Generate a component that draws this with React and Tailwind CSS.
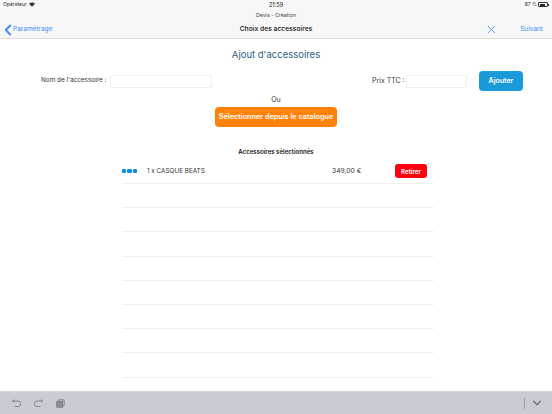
import React from 'react';
import { ChevronLeft, ChevronDown, X } from 'lucide-react';

const StatusBar = () => (
  <div className="relative flex h-[9px] items-center justify-between pl-[3px] pr-[3px] text-[5px] text-[#333]">
    <div className="flex items-center gap-[2px]">
      <span>Opérateur</span>
      <svg width="6" height="5" viewBox="0 0 12 9" fill="#333">
        <path d="M6 9 0 3a8.500 8.500 0 0 1 12 0z" />
      </svg>
    </div>
    <span className="absolute left-0 right-0 top-[1px] text-center text-[5.500px] font-medium">21:59</span>
    <div className="flex items-center gap-[1px]">
      <span>87 %</span>
      <div className="flex items-center">
        <div className="h-[5px] w-[10px] rounded-[1px] border-[0.5px] border-[#333] p-[0.5px]">
          <div className="h-full w-[85%] bg-[#222]" />
        </div>
        <div className="h-[2px] w-[1px] bg-[#333]" />
      </div>
    </div>
  </div>
);

const Header = () => (
  <div className="h-[39px] shrink-0 border-b border-[#dcdcdc] bg-[#f7f7f7]">
    <StatusBar />
    <div className="flex h-[12px] items-center justify-center pt-[2px] text-[5.250px] text-[#444]">Devis - Création</div>
    <div className="relative flex h-[17px] items-center justify-between pr-[9px]">
      <div className="flex items-center text-[#3f8cf5]">
        <ChevronLeft size={18} strokeWidth={2.5} className="ml-[-1px] mr-[-4px]" />
        <span className="text-[6.500px]">Paramétrage</span>
      </div>
      <span className="absolute left-0 right-0 text-center text-[6.750px] font-medium text-[#111]">Choix des accessoires</span>
      <div className="flex items-center gap-[22px] text-[#3f8cf5]">
        <X size={13} strokeWidth={1.5} />
        <span className="text-[6.500px]">Suivant</span>
      </div>
    </div>
  </div>
);

const Lines = () => (
  <div className="ml-[123px] w-[311px]">
    {[0, 1, 2, 3, 4, 5, 6, 7].map((i) => (
      <div key={i} className="h-[24.2px] border-b border-[#f0f0f0]" />
    ))}
  </div>
);

const Toolbar = () => (
  <div className="flex h-[23px] shrink-0 items-center justify-between border-t border-[#d2d4da] bg-[#c9ccd4] pl-[12px] pr-[8px]">
    <div className="flex items-center gap-[13px] text-[#777a82]">
      <svg width="9" height="9" viewBox="0 0 18 18" fill="none" stroke="currentColor" strokeWidth="1.6">
        <path d="M1 4h11a5 5 0 0 1 0 11H5M4.500 1 1 4l3.500 3" />
      </svg>
      <svg width="9" height="9" viewBox="0 0 18 18" fill="none" stroke="currentColor" strokeWidth="1.6">
        <path d="M17 4H6a5 5 0 0 0 0 11h7M13.500 1 17 4l-3.500 3" />
      </svg>
      <svg width="9" height="9" viewBox="0 0 18 18" fill="none" stroke="currentColor" strokeWidth="1.6">
        <path d="M6 4V1.500h10.500V13H14" />
        <rect x="1.500" y="4.500" width="12" height="12" fill="#8a8d95" />
      </svg>
    </div>
    <div className="flex items-center gap-[5px]">
      <div className="h-[11px] w-px bg-[#9a9da5]" />
      <ChevronDown size={14} strokeWidth={2} className="text-[#666970]" />
    </div>
  </div>
);

export default function App() {
  return (
    <div className="flex h-[414px] w-[552px] flex-col overflow-hidden bg-white font-['Inter','Liberation_Sans',sans-serif]">
      <Header />
      <div className="flex-1 overflow-hidden">
        <h1 className="pt-[9px] text-center text-[9.500px] leading-[14px] text-[#2b5f7f]">Ajout d'accessoires</h1>

        <div className="mt-[9px] flex h-[20px] items-center pl-[41px] text-[6.400px] text-[#333]">
          <span className="w-[69px] whitespace-nowrap">Nom de l'accessoire :</span>
          <div className="h-[13px] w-[102px] rounded-[2px] border border-[#efefef]" />
          <span className="ml-[160px] w-[34px] whitespace-nowrap text-[7px]">Prix TTC :</span>
          <div className="h-[13px] w-[61px] rounded-[2px] border border-[#efefef]" />
          <button className="ml-[12px] h-[20px] w-[44px] rounded-[4px] bg-[#1a9ad9] text-[7px] font-semibold text-white">Ajouter</button>
        </div>

        <div className="mt-[3.500px] text-center text-[7px] leading-[9px] text-[#333]">Ou</div>
        <div className="mt-[3.500px] flex justify-center">
          <button className="h-[20px] w-[122px] rounded-[4px] bg-[#ff8208] text-[7.250px] font-semibold text-white">Sélectionner depuis le catalogue</button>
        </div>

        <div className="mt-[21px] text-center text-[6.100px] font-semibold leading-[8px] text-[#111]">Accessoires sélectionnés</div>

        <div className="ml-[123px] mt-[3px] flex h-[25px] w-[311px] items-center border-b border-[#f0f0f0] text-[6.350px] text-[#333]">
          <div className="ml-[-1px] flex w-[25px] gap-[1px]">
            <span className="h-[4px] w-[4.300px] rounded-[1px] bg-[#0d8fe8]" />
            <span className="h-[4px] w-[4.300px] rounded-[1px] bg-[#0d8fe8]" />
            <span className="h-[4px] w-[4.300px] rounded-[1px] bg-[#0d8fe8]" />
          </div>
          <span className="w-[185px] pt-[1px]">1 x CASQUE BEATS</span>
          <span className="w-[63px] pt-[1px] text-[6.750px]">349,00 €</span>
          <button className="h-[14px] w-[32px] rounded-[3px] bg-[#fa0011] pt-[1px] text-[6.200px] font-semibold text-white">Retirer</button>
        </div>
        <Lines />
      </div>
      <Toolbar />
    </div>
  );
}
